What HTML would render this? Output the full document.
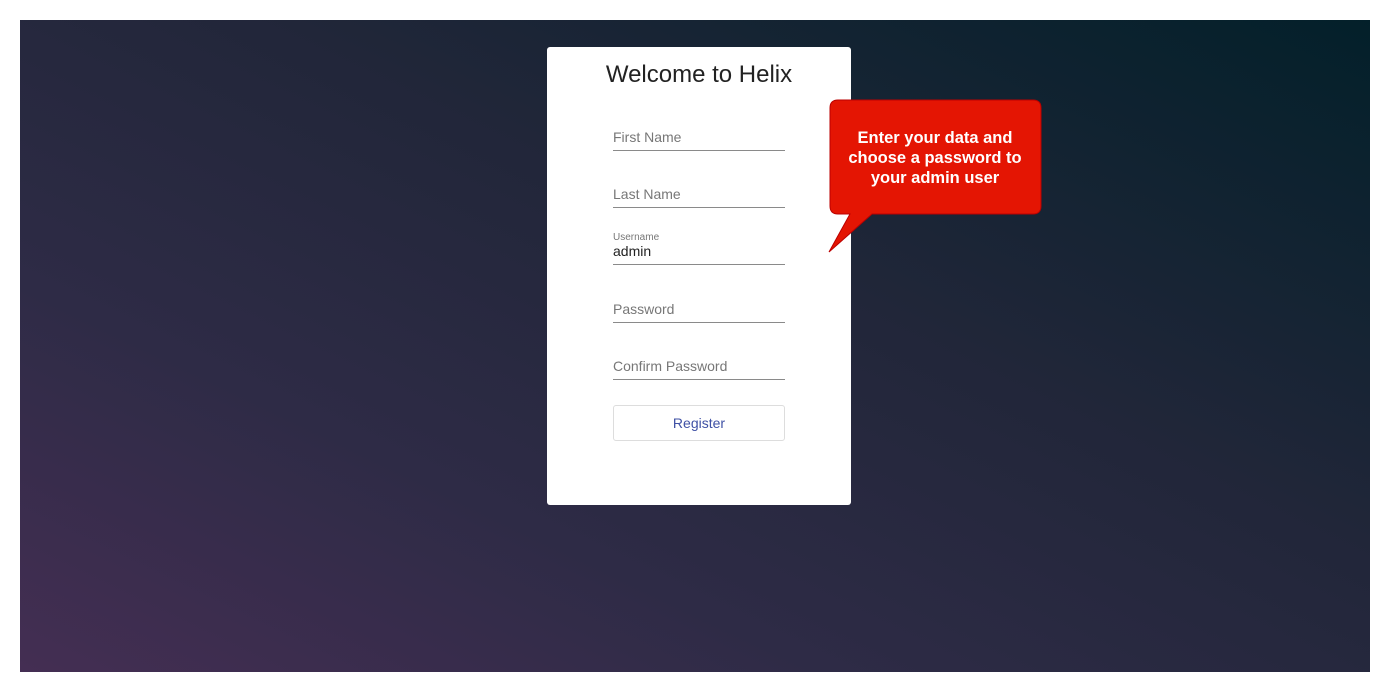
<!DOCTYPE html>
<html><head><style>
body{margin:0;width:1391px;height:693px;background:#fff;position:relative;overflow:hidden;font-family:"Liberation Sans",Arial,sans-serif}
.bg{position:absolute;left:20px;top:20px;width:1350px;height:652px;background:linear-gradient(to top right,#442e53 0%,#2e2b46 30%,#212639 60%,#03202a 100%)}
.card{position:absolute;left:547px;top:47px;width:304px;height:458px;background:#fff;border-radius:3px}
h1{margin:0;position:absolute;top:14px;width:100%;text-align:center;font-weight:normal;font-size:24px;color:#222}
.f{position:absolute;left:66px;width:172px;border-bottom:1px solid #8a8a8a;height:27px}
.f span{position:absolute;bottom:5px;left:0;font-size:14px;color:#777}
.f small{position:absolute;top:-5px;left:0;font-size:10px;color:#777}
.btn{position:absolute;left:66px;top:358px;width:170px;height:34px;border:1px solid #ddd;border-radius:3px;text-align:center;line-height:34px;color:#3f51a5;font-size:14px}
</style></head><body>
<div class="bg"></div>
<div class="card">
<h1>Welcome to Helix</h1>
<div class="f" style="top:76px"><span>First Name</span></div>
<div class="f" style="top:133px"><span>Last Name</span></div>
<div class="f" style="top:190px"><small>Username</small><span style="color:#222">admin</span></div>
<div class="f" style="top:248px"><span>Password</span></div>
<div class="f" style="top:305px"><span>Confirm Password</span></div>
<div class="btn">Register</div>
</div>
<svg style="position:absolute;left:0;top:0" width="1391" height="693">
<path d="M838 100 H1033 Q1041 100 1041 108 V206 Q1041 214 1033 214 H872 L829 252 L850 214 H838 Q830 214 830 206 V108 Q830 100 838 100 Z" fill="#e41503" stroke="#b00" stroke-width="1"/>
<text x="935" y="143" text-anchor="middle" font-family="Liberation Sans" font-weight="bold" font-size="16.5" fill="#fff">Enter your data and</text>
<text x="935" y="163" text-anchor="middle" font-family="Liberation Sans" font-weight="bold" font-size="16.5" fill="#fff">choose a password to</text>
<text x="935" y="183" text-anchor="middle" font-family="Liberation Sans" font-weight="bold" font-size="16.5" fill="#fff">your admin user</text>
</svg>
</body></html>
